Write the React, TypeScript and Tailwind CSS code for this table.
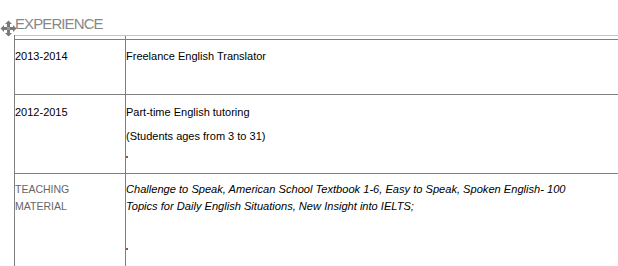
import React from "react";

// Grab handle Word shows at the corner of a table
function MoveHandle() {
  return (
    <svg width="17" height="17" viewBox="0 0 17 17" className="absolute left-0 top-[20px]">
      <g fill="#7a7a7a">
        <path d="M8.5 0.5 L12 4 L10 4 L10 7 L13 7 L13 5 L16.5 8.5 L13 12 L13 10 L10 10 L10 13 L12 13 L8.5 16.5 L5 13 L7 13 L7 10 L4 10 L4 12 L0.5 8.5 L4 5 L4 7 L7 7 L7 4 L5 4 Z" />
      </g>
      <rect x="7" y="7" width="3" height="3" fill="#9a9a9a" />
    </svg>
  );
}

function Mark() {
  return <div className="w-[2px] h-[2px] bg-[#8a5a3a]" />;
}

export default function App() {
  return (
    <div
      className="relative w-[618px] h-[266px] overflow-hidden bg-white text-black"
      style={{ fontFamily: '"Liberation Sans", Arial, sans-serif' }}
    >
      <MoveHandle />
      <div className="h-[35px] pt-[16px] pl-[15px] text-[15px] leading-[16px] tracking-[-0.9px] text-[#888888]">
        EXPERIENCE
      </div>

      <div className="ml-[14px] w-[620px] border-l border-[#808080] text-[11px]">
        {/* thin spacer row under the heading */}
        <div className="grid grid-cols-[110px_1fr] h-[4px] border-t border-[#c4c4c4]">
          <div />
          <div className="border-l border-[#808080]" />
        </div>

        <div className="grid grid-cols-[110px_1fr] h-[55px] border-t border-[#808080] leading-[16px]">
          <div className="pt-[8px]">2013-2014</div>
          <div className="border-l border-[#808080] pt-[8px]">Freelance English Translator</div>
        </div>

        <div className="grid grid-cols-[110px_1fr] h-[79px] border-t border-[#808080] leading-[16px]">
          <div className="pt-[9px]">2012-2015</div>
          <div className="border-l border-[#808080] pt-[9px] flex flex-col gap-[8px]">
            <div>Part-time English tutoring</div>
            <div>(Students ages from 3 to 31)</div>
            <div className="pt-[4px]">
              <Mark />
            </div>
          </div>
        </div>

        <div className="grid grid-cols-[110px_1fr] h-[100px] border-t border-[#808080] leading-[17px]">
          <div className="pt-[7px] text-[10.5px] text-[#666666]">
            TEACHING
            <br />
            MATERIAL
          </div>
          <div className="border-l border-[#808080] pt-[7px] italic whitespace-nowrap text-[11.1px]">
            Challenge to Speak, American School Textbook 1-6, Easy to Speak, Spoken English- 100
            <br />
            Topics for Daily English Situations, New Insight into IELTS;
            <div className="pt-[33px]">
              <Mark />
            </div>
          </div>
        </div>
      </div>
    </div>
  );
}
